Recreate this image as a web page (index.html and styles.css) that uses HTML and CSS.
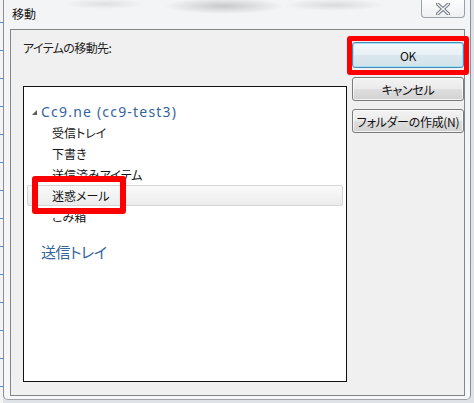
FILE: index.html
```html
<!DOCTYPE html>
<html lang="ja">
<head>
<meta charset="utf-8">
<title>移動</title>
<link rel="stylesheet" href="styles.css">
</head>
<body>
<div class="desk"></div>
<div class="frame">
  <div class="titlebar">
    <span class="title">移動</span>
    <div class="close">
      <svg width="14" height="12" viewBox="0 0 14 12"><path d="M1.5 1 L12.5 11 M12.5 1 L1.5 11" stroke="#6f7780" stroke-width="3.4" stroke-linecap="round"/><path d="M1.5 1 L12.5 11 M12.5 1 L1.5 11" stroke="#f4f6f8" stroke-width="1.4" stroke-linecap="round"/></svg>
    </div>
  </div>
  <div class="client">
    <div class="leftcol">
      <div class="label">アイテムの移動先:</div>
      <div class="listbox">
        <div class="row root">
          <svg class="tri" width="5" height="5" viewBox="0 0 5 5"><path d="M5 0 L5 5 L0 5 Z" fill="#5a5a5a"/></svg>
          <span>Cc9.ne (cc9-test3)</span>
        </div>
        <div class="row child">受信トレイ</div>
        <div class="row child">下書き</div>
        <div class="row child">送信済みアイテム</div>
        <div class="row child sel">迷惑メール</div>
        <div class="row child">ごみ箱</div>
        <div class="row outbox">送信トレイ</div>
      </div>
    </div>
    <div class="buttons">
      <button class="btn default">OK</button>
      <button class="btn">キャンセル</button>
      <button class="btn">フォルダーの作成(N)</button>
    </div>
  </div>
</div>
<div class="mark mark-ok"></div>
<div class="mark mark-junk"></div>
</body>
</html>
```

FILE: styles.css
```css
html, body {
  margin: 0;
  padding: 0;
}
body {
  width: 474px;
  height: 403px;
  overflow: hidden;
  display: flex;
  align-items: flex-start;
  background: #dfe3e8;
  font-family: "Noto Sans CJK JP", "Noto Sans", sans-serif;
  font-feature-settings: "palt";
  color: #1e1e1e;
  position: relative;
}
.desk {
  width: 3px;
  height: 403px;
  flex: none;
  background:
    repeating-linear-gradient(to bottom, transparent 0 22px, #4b8fd8 22px 23px, transparent 23px 28px),
    #f4f4f4;
}
.frame {
  width: 468px;
  height: 400px;
  flex: none;
  display: flex;
  flex-direction: column;
  border-left: 1px solid #8c9096;
  border-right: 1px solid #8c9096;
  border-bottom: 1px solid #a0a4a8;
  border-radius: 0 0 5px 5px;
  padding: 0 5px 3px 6px;
  box-sizing: border-box;
  background:
    radial-gradient(ellipse 60px 8px at 220px 6px, rgba(120,120,120,0.35), transparent),
    radial-gradient(ellipse 50px 6px at 330px 5px, rgba(140,140,140,0.25), transparent),
    radial-gradient(ellipse 40px 5px at 100px 4px, rgba(140,140,140,0.2), transparent),
    linear-gradient(#f3f4f5, #f6f7f8);
}
.titlebar {
  height: 29px;
  flex: none;
  position: relative;
  display: flex;
  align-items: center;
}
.title {
  font-size: 12px;
  line-height: 14px;
  margin-left: 2px;
  margin-top: -1px;
  color: #111;
}
.close {
  position: absolute;
  right: 0;
  top: -1px;
  width: 44px;
  height: 19px;
  border: 1px solid #9ba1a8;
  border-top: none;
  border-radius: 0 0 4px 4px;
  background: linear-gradient(#fdfdfd, #eef0f2);
  display: flex;
  align-items: center;
  justify-content: center;
  box-sizing: border-box;
}
.close svg {
  margin-top: 2px;
}
.client {
  flex: 1;
  display: flex;
  border: 1px solid #858585;
  background: #f0f0f0;
}
.leftcol {
  display: flex;
  flex-direction: column;
  padding: 10px 0 0 12px;
}
.label {
  font-size: 12px;
  line-height: 16px;
  height: 16px;
  letter-spacing: -0.6px;
}
.listbox {
  margin-top: 30px;
  width: 324px;
  height: 296px;
  box-sizing: border-box;
  border: 1px solid #111;
  background: #fff;
  padding-top: 13px;
}
.row {
  display: flex;
  align-items: center;
  box-sizing: border-box;
}
.root {
  height: 22px;
  padding-left: 8px;
  color: #34639e;
  font-family: "Noto Sans", sans-serif;
  font-size: 14px;
  letter-spacing: 1.2px;
}
.tri {
  margin-right: 4px;
  margin-top: 2px;
}
.child {
  height: 21px;
  padding-left: 28px;
  font-size: 12px;
  color: #151515;
}
.sel {
  margin: 0 3px;
  padding-left: 24px;
  height: 21px;
  border: 1px solid #d6d6d6;
  border-radius: 2px;
  background: linear-gradient(#fafafa, #ececec);
}
.outbox {
  margin-top: 12px;
  height: 24px;
  padding-left: 17px;
  font-size: 15px;
  letter-spacing: -0.5px;
  color: #34639e;
}
.buttons {
  display: flex;
  flex-direction: column;
  margin-left: 5px;
  padding-top: 12px;
  gap: 8px;
}
.btn {
  width: 112px;
  height: 24px;
  box-sizing: border-box;
  border: 1px solid #7a7a7a;
  border-radius: 3px;
  background: linear-gradient(#f3f3f3 0%, #ebebeb 48%, #dedede 52%, #d2d2d2 100%);
  font-family: "Noto Sans CJK JP", "Noto Sans", sans-serif;
  font-feature-settings: "palt";
  font-size: 12px;
  letter-spacing: -0.3px;
  color: #111;
  padding: 0;
  box-shadow: inset 0 0 0 1px rgba(255,255,255,0.75);
}
.btn.default {
  height: 26px;
  margin-bottom: 1px;
  border-color: #4a8ab8;
  background: linear-gradient(#f4f9fb 0%, #e8f1f5 48%, #dbe7ed 52%, #d2e2ea 100%);
  box-shadow: inset 0 0 0 1px #9fe3f5;
}
.mark {
  position: absolute;
  border-style: solid;
  border-color: #ff0000;
  box-sizing: border-box;
  border-radius: 3px;
}
.mark-ok {
  left: 347px;
  top: 36px;
  width: 122px;
  height: 39px;
  border-width: 5px;
}
.mark-junk {
  left: 32px;
  top: 176px;
  width: 94px;
  height: 38px;
  border-width: 6px;
}
```
